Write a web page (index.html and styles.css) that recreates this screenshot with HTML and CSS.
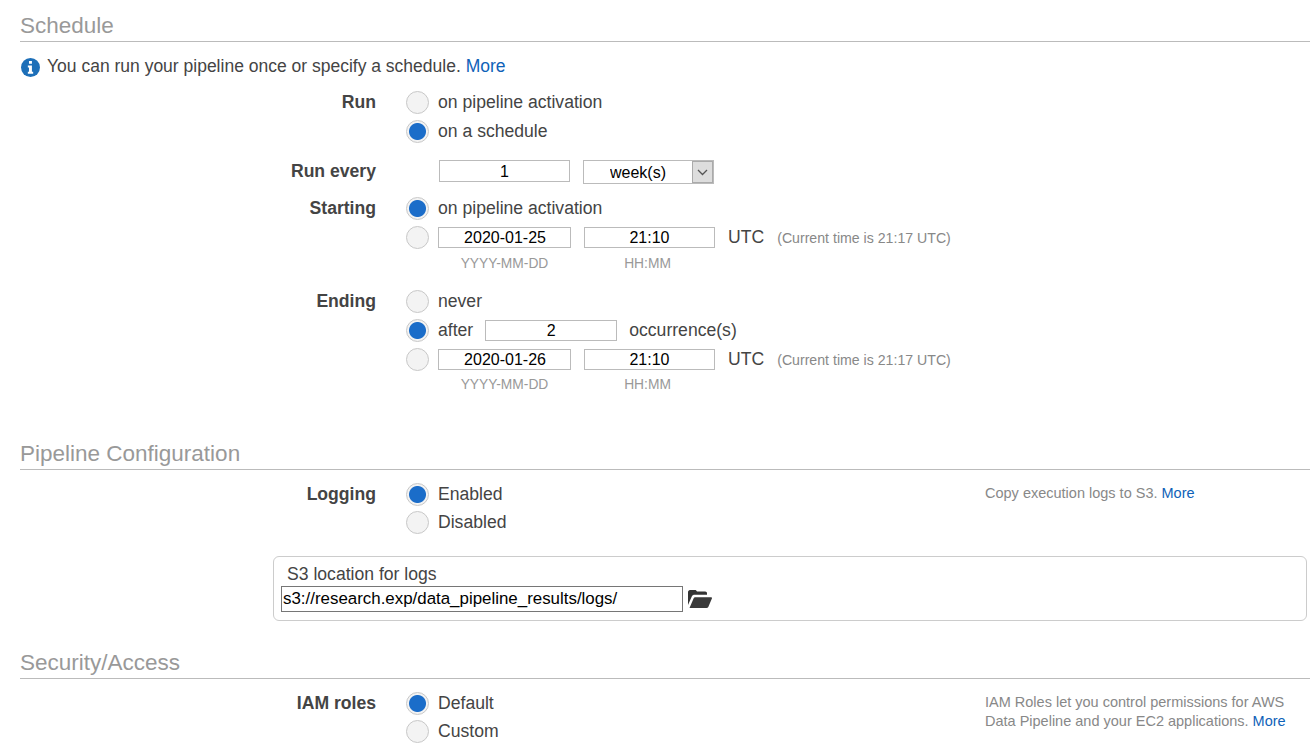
FILE: index.html
```html
<!DOCTYPE html>
<html lang="en">
  <head>
    <meta charset="UTF-8" />
    <meta name="viewport" content="width=device-width, initial-scale=1.0" />
    <title>Schedule</title>
    <link rel="stylesheet" href="styles.css">
  </head>
  <body>
    <section class="section section-schedule">
      <h2 class="section-title">Schedule</h2>
      <p class="info">
        <svg class="info-icon" viewBox="0 0 20 20" width="19" height="19">
          <circle cx="10" cy="10" r="10" fill="#1d6fb8" />
          <path d="M8.400 3.200h3.100v2.900H8.400zM7.200 7.900h4.300v6.500h1.300v2.200H7.200v-2.200h1.200v-4.300H7.200z" fill="#fff" />
        </svg>
        <span>You can run your pipeline once or specify a schedule. <a href="#">More</a></span>
      </p>

      <div class="field field-run">
        <div class="field-label">Run</div>
        <div class="field-body">
          <label class="option"><input type="radio" name="run"> on pipeline activation</label>
          <label class="option"><input type="radio" name="run" checked> on a schedule</label>
        </div>
      </div>

      <div class="field field-every">
        <div class="field-label">Run every</div>
        <div class="field-body every-line">
          <input class="text-box every-box" type="text" value="1">
          <div class="select-wrap">
            <select class="unit-select">
              <option>week(s)</option>
            </select>
            <span class="select-button">
              <svg viewBox="0 0 11 7" width="11" height="7">
                <path d="M1 1l4.500 4.500L10 1" fill="none" stroke="#555" stroke-width="1.300" />
              </svg>
            </span>
          </div>
        </div>
      </div>

      <div class="field field-starting">
        <div class="field-label">Starting</div>
        <div class="field-body">
          <label class="option"><input type="radio" name="start" checked> on pipeline activation</label>
          <div class="option option-date">
            <input type="radio" name="start">
            <input class="text-box date-box" type="text" value="2020-01-25">
            <input class="text-box time-box" type="text" value="21:10">
            <span class="utc">UTC</span>
            <span class="now">(Current time is 21:17 UTC)</span>
          </div>
          <div class="hints"><span class="hint-date">YYYY-MM-DD</span><span class="hint-time">HH:MM</span></div>
        </div>
      </div>

      <div class="field field-ending">
        <div class="field-label">Ending</div>
        <div class="field-body">
          <label class="option"><input type="radio" name="end"> never</label>
          <div class="option">
            <input type="radio" name="end" checked> after
            <input class="text-box after-box" type="text" value="2">
            <span class="occurrence">occurrence(s)</span>
          </div>
          <div class="option option-date">
            <input type="radio" name="end">
            <input class="text-box date-box" type="text" value="2020-01-26">
            <input class="text-box time-box" type="text" value="21:10">
            <span class="utc">UTC</span>
            <span class="now">(Current time is 21:17 UTC)</span>
          </div>
          <div class="hints"><span class="hint-date">YYYY-MM-DD</span><span class="hint-time">HH:MM</span></div>
        </div>
      </div>
    </section>

    <section class="section section-config">
      <h2 class="section-title">Pipeline Configuration</h2>
      <div class="field field-logging">
        <div class="field-label">Logging</div>
        <div class="field-body tight">
          <label class="option"><input type="radio" name="log" checked> Enabled</label>
          <label class="option"><input type="radio" name="log"> Disabled</label>
        </div>
        <p class="help">Copy execution logs to S3. <a href="#">More</a></p>
      </div>
      <div class="log-box">
        <div class="log-title">S3 location for logs</div>
        <div class="log-line">
          <input class="log-input" type="text" value="s3://research.exp/data_pipeline_results/logs/">
          <svg class="folder" viewBox="0 0 24 18" width="24" height="18">
            <path d="M0 15V2.200C0 1 .9 0 2 0h5c1 0 1.600.6 2 1.600h8.200c1.100 0 1.800.8 1.800 1.800v1.400H6.500c-1.200 0-2 .5-2.600 1.500z" fill="#333" />
            <path d="M1.500 18l4.300-10c.2-.5.7-.8 1.200-.8h16c.7 0 1.200.7.900 1.300l-3.600 8.400c-.4.700-1 1.100-1.800 1.100z" fill="#3a3a3a" />
          </svg>
        </div>
      </div>
    </section>

    <section class="section section-security">
      <h2 class="section-title">Security/Access</h2>
      <div class="field field-iam">
        <div class="field-label">IAM roles</div>
        <div class="field-body tight">
          <label class="option"><input type="radio" name="iam" checked> Default</label>
          <label class="option"><input type="radio" name="iam"> Custom</label>
        </div>
        <div class="help">
          <div>IAM Roles let you control permissions for AWS</div>
          <div>Data Pipeline and your EC2 applications. <a href="#">More</a></div>
        </div>
      </div>
    </section>
  </body>
</html>
```

FILE: styles.css
```css
html, body {
  height: 747px;
  overflow: hidden;
}
body {
  margin: 0;
  padding: 0 2px 0 20px;
  background: #fff;
  color: #444;
  font-family: 'Liberation Sans', Arial, sans-serif;
  font-size: 17.6px;
}
a {
  color: #0f62b8;
  text-decoration: none;
}
.section-title {
  margin: 0;
  height: 41px;
  border-bottom: 1px solid #bbb;
  color: #999;
  font-size: 22.5px;
  font-weight: normal;
  line-height: 51px;
}
.section-config {
  margin-top: 32px;
}
.section-security {
  margin-top: 16px;
}
.info {
  display: flex;
  align-items: flex-start;
  gap: 7px;
  margin: 14px 0 0;
  height: 20px;
  font-size: 17.5px;
  line-height: 20px;
  white-space: pre;
}
.info-icon {
  flex: none;
  margin: 2px 0 0 1px;
}
.field {
  display: grid;
  grid-template-columns: 356px auto 1fr;
  column-gap: 31px;
}
.field-label {
  height: 29px;
  font-weight: bold;
  line-height: 29px;
  text-align: right;
}
.field-body {
  min-width: 0;
}
.field-run {
  margin-top: 12px;
}
.field-every {
  margin-top: 11px;
}
.field-starting {
  margin-top: 8px;
}
.field-ending {
  margin-top: 12px;
}
.option {
  display: flex;
  align-items: center;
  gap: 9px;
  height: 29px;
  white-space: nowrap;
}
.tight .option + .option {
  margin-top: -1px;
}
input[type="radio"] {
  appearance: none;
  flex: none;
  box-sizing: border-box;
  width: 23px;
  height: 23px;
  margin: 0 0 0 -1px;
  border: 1px solid #c8c8c8;
  border-radius: 50%;
  background: #f3f3f3;
}
input[type="radio"]:checked {
  background: radial-gradient(circle, #1b6dc9 0, #1b6dc9 8px, #f3f3f3 9px);
}
.text-box {
  box-sizing: border-box;
  height: 21px;
  padding: 0;
  border: 1px solid #bbb;
  background: #fff;
  color: #000;
  font-family: inherit;
  font-size: 16px;
  text-align: center;
}
.every-line {
  display: flex;
  align-items: flex-start;
  gap: 13px;
  padding: 3px 0 0 32px;
}
.every-box {
  width: 131px;
  height: 22px;
  padding-top: 1px;
}
.select-wrap {
  position: relative;
  width: 131px;
  height: 24px;
}
.unit-select {
  appearance: none;
  box-sizing: border-box;
  width: 100%;
  height: 100%;
  padding: 0 22px 0 26px;
  border: 1px solid #bbb;
  border-radius: 0;
  background: #fff;
  color: #000;
  font-family: inherit;
  font-size: 16px;
}
.select-button {
  position: absolute;
  top: 1px;
  right: 1px;
  display: flex;
  align-items: center;
  justify-content: center;
  box-sizing: border-box;
  width: 21px;
  height: 22px;
  border: 1px solid #aaa;
  background: #ddd;
}
.date-box {
  width: 133px;
  padding-left: 1px;
}
.time-box {
  width: 131px;
  margin-left: 4px;
}
.utc {
  margin-left: 4px;
}
.now {
  margin-left: 4px;
  color: #888;
  font-size: 14.15px;
}
.after-box {
  width: 132px;
  margin-left: 3px;
}
.occurrence {
  margin-left: 3px;
}
.hints {
  display: flex;
  height: 23px;
  padding-left: 31px;
  color: #999;
  font-size: 13.8px;
  line-height: 23px;
}
.field-ending .hints {
  margin-top: -1px;
}
.hint-date {
  width: 133px;
  text-align: center;
}
.hint-time {
  width: 131px;
  margin-left: 11px;
  text-align: center;
}
.field-logging {
  margin-top: 10px;
}
.field-iam {
  margin-top: 10px;
}
.help {
  box-sizing: border-box;
  width: 325px;
  margin: 0 0 0 auto;
  padding: 4px 20px 0 0;
  color: #888;
  font-size: 14.5px;
  line-height: 19px;
}
.log-box {
  box-sizing: border-box;
  width: 1034px;
  height: 65px;
  margin: 19px 0 0 253px;
  padding: 7px 7px 0;
  border: 1px solid #ccc;
  border-radius: 6px;
}
.log-title {
  padding-left: 6px;
  line-height: 20px;
}
.log-line {
  display: flex;
  align-items: center;
  gap: 5px;
  margin-top: 2px;
}
.log-input {
  box-sizing: border-box;
  width: 402px;
  height: 26px;
  padding: 0 1px;
  border: 1px solid #767676;
  background: #fff;
  color: #000;
  font-family: inherit;
  font-size: 16.9px;
}
```
